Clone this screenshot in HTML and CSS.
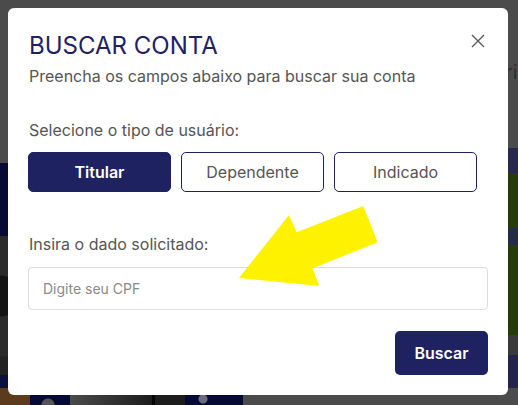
FILE: index.html
```html
<!DOCTYPE html>
<html lang="pt-BR">
<head>
<meta charset="utf-8">
<title>Buscar conta</title>
<link rel="stylesheet" href="styles.css">
</head>
<body>
<div class="backdrop">
  <div class="bg bg-l1"></div>
  <div class="bg bg-l2"></div>
  <div class="bg bg-l3"></div>
  <div class="bg bg-l4"></div>
  <div class="bg bg-r1"></div>
  <div class="bg bg-r2"></div>
  <div class="bg bg-r3"></div>
  <div class="bg bg-r4"></div>
  <div class="bg bg-b1"></div>
  <div class="bg bg-b2"></div>
  <div class="bg bg-b3"></div>
  <div class="bg bg-b4"></div>
  <div class="bg bg-b5"></div>
  <span class="bg-text">ri</span>
</div>

<div class="modal">
  <button class="close" aria-label="Fechar">
    <svg width="14" height="14" viewBox="0 0 14 14"><path d="M1 1 L13 13 M13 1 L1 13" stroke="#5a5a5a" stroke-width="1.4" fill="none"/></svg>
  </button>
  <h1 class="title">BUSCAR CONTA</h1>
  <p class="subtitle">Preencha os campos abaixo para buscar sua conta</p>

  <p class="label label-type">Selecione o tipo de usuário:</p>
  <div class="types">
    <button class="type active">Titular</button>
    <button class="type">Dependente</button>
    <button class="type">Indicado</button>
  </div>

  <p class="label label-data">Insira o dado solicitado:</p>
  <input class="field" type="text" placeholder="Digite seu CPF">

  <div class="actions">
    <button class="submit">Buscar</button>
  </div>

  <svg class="arrow" width="150" height="90" viewBox="230 200 150 90">
    <polygon fill="#fff200" points="239,278 289,215 296.7,232.3 363.3,206 377.7,242.3 312.7,268.3 319.3,286"/>
  </svg>
</div>
</body>
</html>
```

FILE: styles.css
```css
* { box-sizing: border-box; }

html, body {
  margin: 0;
  padding: 0;
}

body {
  width: 518px;
  height: 405px;
  background: #4b4b4b;
  font-family: Inter, "Noto Sans", sans-serif;
  position: relative;
  overflow: hidden;
  padding: 8px;
}

.backdrop {
  position: absolute;
  inset: 0;
}

.bg { position: absolute; }
.bg-l1 { left: 0; top: 163px; width: 10px; height: 73px; background: #060a35; }
.bg-l2 { left: 0; top: 236px; width: 10px; height: 139px; background: radial-gradient(circle at 0 60px, #141414 0 20px, #2b2b2b 21px 60px, #222 61px); }
.bg-l3 { left: 0; top: 375px; width: 10px; height: 13px; background: #0a1040; }
.bg-l4 { left: 0; top: 388px; width: 30px; height: 17px; background: #5b3a1e; }
.bg-r1 { left: 506px; top: 148px; width: 12px; height: 25px; background: #28274e; }
.bg-r2 { left: 506px; top: 173px; width: 12px; height: 162px; background: linear-gradient(180deg, #263c0b 0 55px, #252a45 55px 72px, #263c0b 72px); }
.bg-r3 { left: 506px; top: 335px; width: 12px; height: 20px; background: #3a3a3a; }
.bg-r4 { left: 506px; top: 355px; width: 12px; height: 33px; background: #23234d; }
.bg-b1 { left: 30px; top: 393px; width: 40px; height: 12px; background: radial-gradient(circle at 18px 12px, #555 0 6px, #050a35 7px); }
.bg-b2 { left: 70px; top: 393px; width: 82px; height: 12px; background: linear-gradient(90deg, #4a4a4a, #1c1c1c); }
.bg-b3 { left: 152px; top: 393px; width: 3px; height: 12px; background: #050505; }
.bg-b4 { left: 155px; top: 393px; width: 30px; height: 12px; background: #1c1c1c; }
.bg-b5 { left: 185px; top: 393px; width: 58px; height: 12px; background: radial-gradient(circle at 18px 6px, #6b6b7a 0 4px, #050a35 5px); }

.bg-text {
  position: absolute;
  left: 505px;
  top: 60px;
  font-size: 20px;
  color: #2e2e2e;
  line-height: 24px;
}

.modal {
  position: relative;
  width: 500px;
  height: 387px;
  background: #ffffff;
  border-radius: 6px;
  padding: 23px 20px 20px;
  display: flex;
  flex-direction: column;
}

.close {
  position: absolute;
  top: 26px;
  right: 23px;
  width: 14px;
  height: 14px;
  padding: 0;
  border: 0;
  background: transparent;
  display: flex;
}

.title {
  margin: 0;
  padding-left: 1px;
  font-size: 24px;
  line-height: 29px;
  font-weight: 400;
  color: #1f2261;
}

.subtitle {
  margin: 7px 0 0;
  padding-left: 1px;
  font-size: 16px;
  line-height: 19px;
  color: #555555;
}

.label {
  margin: 0;
  padding-left: 1px;
  font-size: 16px;
  line-height: 19px;
  color: #555555;
}

.label-type { margin-top: 35px; }
.label-data { margin-top: 43px; }

.types {
  margin-top: 12px;
  display: grid;
  grid-template-columns: repeat(3, 143px);
  gap: 10px;
}

.type {
  height: 40px;
  border: 1px solid #1f2261;
  border-radius: 5px;
  background: #ffffff;
  color: #555555;
  font-family: inherit;
  font-size: 16px;
  padding: 0;
}

.type.active {
  background: #1f2261;
  color: #ffffff;
  font-weight: 600;
}

.field {
  margin-top: 13px;
  width: 460px;
  height: 44px;
  border: 1px solid #dddddd;
  border-radius: 4px;
  padding: 0 14px;
  font-family: inherit;
  font-size: 14px;
  color: #333;
  outline: none;
}

.field::placeholder { color: #8a8a8a; }

.actions {
  margin-top: 21px;
  display: flex;
  justify-content: flex-end;
}

.submit {
  width: 93px;
  height: 44px;
  border: 0;
  border-radius: 5px;
  background: #1f2261;
  color: #ffffff;
  font-family: inherit;
  font-size: 16px;
  font-weight: 600;
  padding: 0;
}

.arrow {
  position: absolute;
  left: 222px;
  top: 192px;
}
```
